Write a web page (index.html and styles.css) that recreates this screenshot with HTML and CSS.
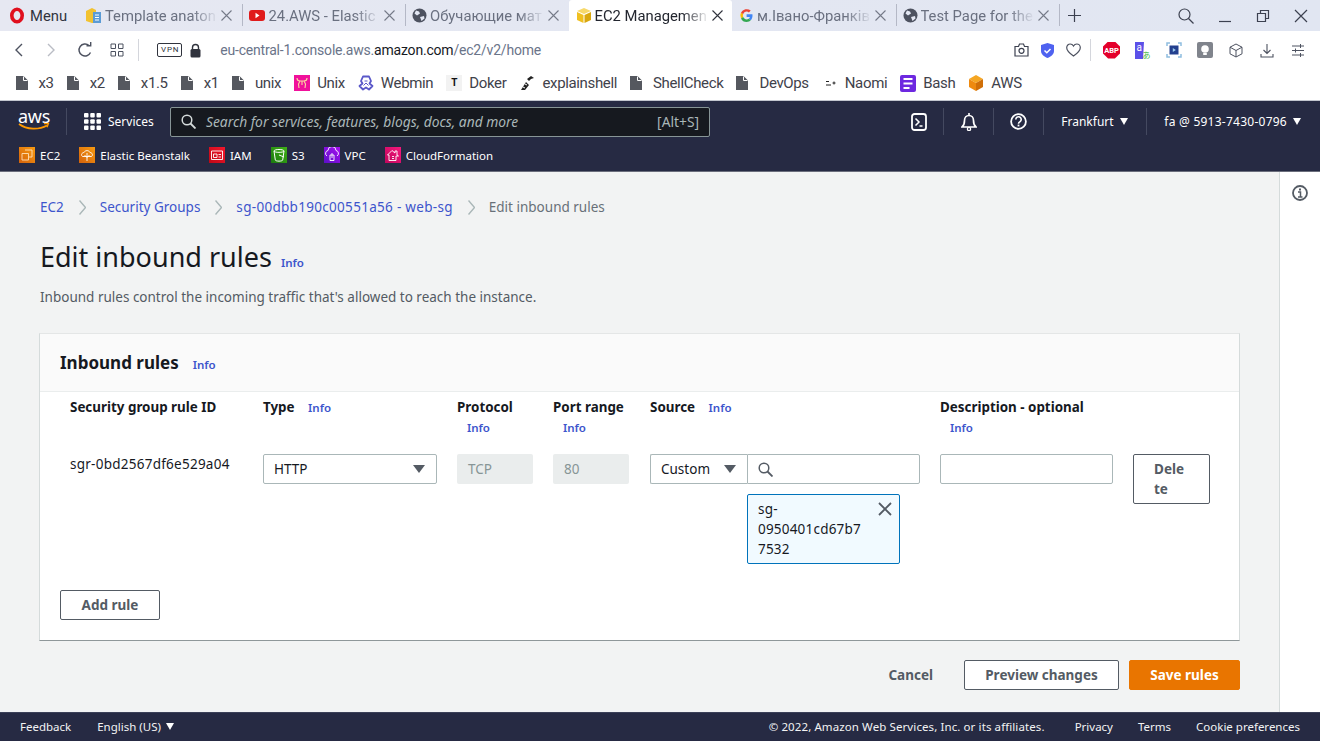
FILE: index.html
```html
<!DOCTYPE html>
<html lang="en">
<head>
  <meta charset="UTF-8">
  <title>Edit inbound rules</title>
  <link rel="stylesheet" href="styles.css">
</head>
<body>
  <div class="tabbar">
    <div class="menu">
      <svg width="16" height="17" viewBox="0 0 16 17"><ellipse cx="8" cy="8.500" rx="5.200" ry="6.300" fill="none" stroke="#e0101e" stroke-width="3.600"/></svg>
      <span>Menu</span>
    </div>
    <div class="tab">
      <svg class="fav" width="17" height="17" viewBox="0 0 17 17"><path d="M1 4l6-3 4 2v13H7l-6-2z" fill="#f2c230"/><path d="M8 5h8v11H8z" fill="#5b9bd5"/><path d="M10 8h4M10 10.500h4M10 13h4" stroke="#fff"/></svg>
      <span class="tab-title">Template anaton</span>
      <svg class="tab-x" width="11" height="11" viewBox="0 0 11 11"><path d="M.5 .5l10 10M10.500 .5l-10 10" stroke="#757a88" stroke-width="1.100"/></svg>
    </div>
    <div class="tab">
      <svg class="fav" width="17" height="17" viewBox="0 0 17 17"><rect x="0" y="3" width="16" height="11" rx="3" fill="#e01b1b"/><path d="M6.500 5.800l4 2.700-4 2.700z" fill="#fff"/></svg>
      <span class="tab-title">24.AWS - Elastic</span>
      <svg class="tab-x" width="11" height="11" viewBox="0 0 11 11"><path d="M.5 .5l10 10M10.500 .5l-10 10" stroke="#757a88" stroke-width="1.100"/></svg>
    </div>
    <div class="tab">
      <svg class="fav" width="15" height="15" viewBox="0 0 15 15"><circle cx="7.500" cy="7.500" r="7" fill="#4d5260"/><path d="M4 2.500l3 1 1 2-3 2-2.500-2zM8 9l4-1 .5 2.500-3 2.500z" fill="#e3e7f3"/></svg>
      <span class="tab-title">Обучающие мат</span>
      <svg class="tab-x" width="11" height="11" viewBox="0 0 11 11"><path d="M.5 .5l10 10M10.500 .5l-10 10" stroke="#757a88" stroke-width="1.100"/></svg>
    </div>
    <div class="tab active">
      <svg class="fav" width="16" height="17" viewBox="0 0 16 17"><path d="M8 1l7 3-7 3-7-3z" fill="#f7d96b"/><path d="M1 5l6.500 3v8L1 13z" fill="#f0c020"/><path d="M15 5L8.500 8v8L15 13z" fill="#d9a80f"/></svg>
      <span class="tab-title">EC2 Managemen</span>
      <svg class="tab-x" width="11" height="11" viewBox="0 0 11 11"><path d="M.5 .5l10 10M10.500 .5l-10 10" stroke="#30333d" stroke-width="1.100"/></svg>
    </div>
    <div class="tab">
      <svg class="fav" width="15" height="15" viewBox="0 0 15 15"><path d="M13.500 7.700c0-.5 0-1-.1-1.400H7.600v2.700h3.300a2.900 2.900 0 0 1-1.200 1.800l2 1.500c1.100-1.100 1.800-2.700 1.800-4.600z" fill="#4285f4"/><path d="M7.600 14c1.800 0 3.200-.6 4.100-1.700l-2-1.500c-.5.400-1.200.6-2.100.6-1.600 0-3-1.100-3.500-2.600l-2.100 1.600C3 12.600 5.100 14 7.600 14z" fill="#34a853"/><path d="M4.100 8.800a4 4 0 0 1 0-2.600L2 4.600a6.500 6.500 0 0 0 0 5.800z" fill="#fbbc05"/><path d="M7.600 3.500c.9 0 1.700.3 2.300.9L11.700 2.600A6.400 6.400 0 0 0 2 4.600l2.100 1.600c.5-1.500 1.900-2.700 3.500-2.700z" fill="#ea4335"/></svg>
      <span class="tab-title">м.Івано-Франків</span>
      <svg class="tab-x" width="11" height="11" viewBox="0 0 11 11"><path d="M.5 .5l10 10M10.500 .5l-10 10" stroke="#757a88" stroke-width="1.100"/></svg>
    </div>
    <div class="tab">
      <svg class="fav" width="15" height="15" viewBox="0 0 15 15"><circle cx="7.500" cy="7.500" r="7" fill="#4d5260"/><path d="M4 2.500l3 1 1 2-3 2-2.500-2zM8 9l4-1 .5 2.500-3 2.500z" fill="#e3e7f3"/></svg>
      <span class="tab-title">Test Page for the</span>
      <svg class="tab-x" width="11" height="11" viewBox="0 0 11 11"><path d="M.5 .5l10 10M10.500 .5l-10 10" stroke="#757a88" stroke-width="1.100"/></svg>
    </div>
    <div class="tab-plus">
      <svg width="13" height="13" viewBox="0 0 13 13"><path d="M6.500 0v13M0 6.500h13" stroke="#3c4150" stroke-width="1.200"/></svg>
    </div>
    <div class="win-controls">
      <svg width="16" height="16" viewBox="0 0 16 16"><circle cx="6.500" cy="6.500" r="5.500" fill="none" stroke="#3c4150" stroke-width="1.200"/><path d="M10.500 10.500l5 5" stroke="#3c4150" stroke-width="1.200"/></svg>
      <svg width="14" height="14" viewBox="0 0 14 14"><path d="M1 12.500h12" stroke="#3c4150" stroke-width="1.200"/></svg>
      <svg width="14" height="14" viewBox="0 0 14 14"><path d="M1.500 4.500h8v8h-8zM4.500 4.500v-3h8v8h-3" fill="none" stroke="#3c4150" stroke-width="1.200"/></svg>
      <svg width="14" height="14" viewBox="0 0 14 14"><path d="M1 1l12 12M13 1L1 13" stroke="#3c4150" stroke-width="1.200"/></svg>
    </div>
  </div>

  <div class="addressbar">
    <svg class="nav-ico" width="10" height="16" viewBox="0 0 10 16"><path d="M8 2L2 8l6 6" fill="none" stroke="#4d5260" stroke-width="1.400"/></svg>
    <svg class="nav-ico" width="10" height="16" viewBox="0 0 10 16"><path d="M2 2l6 6-6 6" fill="none" stroke="#b9bcc4" stroke-width="1.400"/></svg>
    <svg class="nav-ico" width="16" height="16" viewBox="0 0 16 16"><path d="M13.500 10.500A6 6 0 1 1 12 3.500" fill="none" stroke="#4d5260" stroke-width="1.400"/><path d="M9.500 3.800h4.200V0" fill="none" stroke="#4d5260" stroke-width="1.400"/></svg>
    <svg class="nav-ico" width="14" height="14" viewBox="0 0 14 14"><path d="M1 1h4.500v4.500H1zM8.500 1H13v4.500H8.500zM1 8.500h4.500V13H1zM8.500 8.500H13V13H8.500z" fill="none" stroke="#4d5260"/></svg>
    <span class="addr-sep"></span>
    <span class="vpn">VPN</span>
    <svg width="11" height="15" viewBox="0 0 11 15"><path d="M2.500 7V4.500a3 3 0 0 1 6 0V7" fill="none" stroke="#30333d" stroke-width="1.400"/><rect x=".5" y="6" width="10" height="8.500" rx="1.500" fill="#30333d"/></svg>
    <span class="url">eu-central-1.console.aws.<b>amazon.com</b>/ec2/v2/home</span>
    <div class="ext-icons">
      <span class="ext narrow"><svg width="15" height="14" viewBox="0 0 15 14"><path d="M1 3.500h3.500l1-2.500h4l1 2.500H14V13H1z" fill="none" stroke="#3c4150" stroke-width="1.200"/><circle cx="7.500" cy="7.800" r="2.500" fill="none" stroke="#3c4150" stroke-width="1.200"/></svg></span>
      <span class="ext narrow"><svg width="13" height="15" viewBox="0 0 13 15"><path d="M0 2l6.500-2L13 2v6c0 3.500-3 5.500-6.500 7C3 13.500 0 11.500 0 8z" fill="#4f62f0"/><path d="M3.500 7.500l2.300 2.300 3.700-3.800" fill="none" stroke="#fff" stroke-width="1.500"/></svg></span>
      <span class="ext narrow"><svg width="15" height="14" viewBox="0 0 15 14"><path d="M7.500 13C3.500 10.200.7 7.800.7 4.700.7 2.500 2.400 1 4.200 1c1.300 0 2.600.8 3.300 2 .7-1.200 2-2 3.300-2 1.800 0 3.500 1.500 3.500 3.700 0 3.100-2.800 5.500-6.800 8.300z" fill="none" stroke="#4d5260" stroke-width="1.200"/></svg></span>
      <span class="ext-sep"></span>
      <span class="ext"><span class="abp">ABP</span></span>
      <span class="ext"><svg class="translate" width="17" height="17" viewBox="0 0 17 17"><path d="M1 0h9l-1 17H1z" fill="#5b50e8"/><text x="2.500" y="8.500" font-size="10" fill="#fff">a</text><text x="8.500" y="16" font-size="8" fill="#3db83a">あ</text></svg></span>
      <span class="ext"><svg width="16" height="16" viewBox="0 0 16 16"><path d="M1 4V1h3M12 1h3v3M15 12v3h-3M4 15H1v-3" fill="none" stroke="#8fbde0" stroke-width="1.500"/><rect x="3.500" y="3.500" width="9" height="9" fill="#24408e"/><path d="M6.800 6l3 2-3 2z" fill="#9ccbee"/></svg></span>
      <span class="ext"><svg width="16" height="16" viewBox="0 0 16 16"><rect width="16" height="16" rx="2" fill="#80848c"/><circle cx="8" cy="7" r="3.800" fill="#fff"/><rect x="6.200" y="11" width="3.600" height="2" fill="#fff"/></svg></span>
      <span class="ext"><svg width="14" height="15" viewBox="0 0 14 15"><path d="M7 1l6 3.200v6.600L7 14l-6-3.200V4.200zM1 4.200l6 3.300 6-3.300M7 7.500V14" fill="none" stroke="#4d5260"/></svg></span>
      <span class="ext"><svg width="14" height="15" viewBox="0 0 14 15"><path d="M7 1v9M3.500 7L7 10.500 10.500 7M1 11v3h12v-3" fill="none" stroke="#4d5260" stroke-width="1.100"/></svg></span>
      <span class="ext"><svg width="14" height="13" viewBox="0 0 14 13"><path d="M1 2h12M1 6.500h12M1 11h12" stroke="#4d5260"/><path d="M9.500 0v4M4.500 4.500v4M9.500 9v4" stroke="#4d5260"/></svg></span>
    </div>
  </div>

  <div class="bookmarks">
    <span class="bm"><svg class="doc" width="12" height="14" viewBox="0 0 12 14"><path d="M0 0h7.500L12 4.500V14H0z" fill="#55585f"/><path d="M7.500 .5v4h4" fill="none" stroke="#fff"/></svg>x3</span>
    <span class="bm"><svg class="doc" width="12" height="14" viewBox="0 0 12 14"><path d="M0 0h7.500L12 4.500V14H0z" fill="#55585f"/><path d="M7.500 .5v4h4" fill="none" stroke="#fff"/></svg>x2</span>
    <span class="bm"><svg class="doc" width="12" height="14" viewBox="0 0 12 14"><path d="M0 0h7.500L12 4.500V14H0z" fill="#55585f"/><path d="M7.500 .5v4h4" fill="none" stroke="#fff"/></svg>x1.5</span>
    <span class="bm"><svg class="doc" width="12" height="14" viewBox="0 0 12 14"><path d="M0 0h7.500L12 4.500V14H0z" fill="#55585f"/><path d="M7.500 .5v4h4" fill="none" stroke="#fff"/></svg>x1</span>
    <span class="bm"><svg class="doc" width="12" height="14" viewBox="0 0 12 14"><path d="M0 0h7.500L12 4.500V14H0z" fill="#55585f"/><path d="M7.500 .5v4h4" fill="none" stroke="#fff"/></svg>unix</span>
    <span class="bm"><svg width="16" height="16" viewBox="0 0 16 16"><rect width="16" height="16" fill="#f0119b"/><path d="M3 3c0 2 1 3 3 3h4c2 0 3-1 3-3M6 6L4.500 9 5 13M10 6l1.500 3-.5 4M8 6v4" fill="none" stroke="#fbd9a0" stroke-width="1.100"/></svg>Unix</span>
    <span class="bm"><svg width="16" height="16" viewBox="0 0 16 16"><path d="M5 1.500h6L13 6l-1.500 2.500L14.500 11 11 14.500l-3-2-3 2L1.500 11l3-2.500L3 6z" fill="none" stroke="#5a58c9" stroke-width="1.800" stroke-linejoin="round"/><path d="M6.500 6h3M5.500 10.500L8 8l2.500 2.500" fill="none" stroke="#5a58c9"/></svg>Webmin</span>
    <span class="bm"><span class="doker-ico">T</span>Doker</span>
    <span class="bm"><svg width="16" height="16" viewBox="0 0 16 16"><path d="M2 15l5-8 3 3-4 5zM8 4l4-3 3 2-3 1-2 2z" fill="#222"/><path d="M4 12l2 1M6 9l2 1" stroke="#fff"/></svg>explainshell</span>
    <span class="bm"><svg class="doc" width="12" height="14" viewBox="0 0 12 14"><path d="M0 0h7.500L12 4.500V14H0z" fill="#55585f"/><path d="M7.500 .5v4h4" fill="none" stroke="#fff"/></svg>ShellCheck</span>
    <span class="bm"><svg class="doc" width="12" height="14" viewBox="0 0 12 14"><path d="M0 0h7.500L12 4.500V14H0z" fill="#55585f"/><path d="M7.500 .5v4h4" fill="none" stroke="#fff"/></svg>DevOps</span>
    <span class="bm"><svg width="16" height="16" viewBox="0 0 16 16"><path d="M4 6.500h3M4 10h5M12 6.500v3M10.500 8h3" stroke="#222"/></svg>Naomi</span>
    <span class="bm"><svg width="16" height="17" viewBox="0 0 16 17"><rect y="0" width="16" height="17" rx="2" fill="#6d28e0"/><path d="M3.500 4h9M3.500 8.500h9M3.500 13h6" stroke="#fff" stroke-width="2"/></svg>Bash</span>
    <span class="bm"><svg width="16" height="18" viewBox="0 0 16 18"><path d="M8 1l7 4-7 4-7-4z" fill="#f5a623"/><path d="M1 5l7 4v8l-7-4z" fill="#ee8a10"/><path d="M15 5L8 9v8l7-4z" fill="#d06f08"/></svg>AWS</span>
  </div>

  <header class="aws-nav">
    <div class="nav-top">
      <div class="aws-logo">
        <span>aws</span>
        <svg width="32" height="8" viewBox="0 0 32 8"><path d="M1 1c8 6 20 6 28 1.500" fill="none" stroke="#f90" stroke-width="1.800"/><path d="M26 .5l4.500-.2-1.500 4" fill="none" stroke="#f90" stroke-width="1.400"/></svg>
      </div>
      <span class="nav-sep"></span>
      <div class="services">
        <svg width="17" height="17" viewBox="0 0 17 17" fill="#fff"><rect width="4.500" height="4.500" rx="1"/><rect x="6.250" width="4.500" height="4.500" rx="1"/><rect x="12.500" width="4.500" height="4.500" rx="1"/><rect y="6.250" width="4.500" height="4.500" rx="1"/><rect x="6.250" y="6.250" width="4.500" height="4.500" rx="1"/><rect x="12.500" y="6.250" width="4.500" height="4.500" rx="1"/><rect y="12.500" width="4.500" height="4.500" rx="1"/><rect x="6.250" y="12.500" width="4.500" height="4.500" rx="1"/><rect x="12.500" y="12.500" width="4.500" height="4.500" rx="1"/></svg>
        <span>Services</span>
      </div>
      <div class="search">
        <svg width="15" height="15" viewBox="0 0 15 15"><circle cx="6" cy="6" r="4.800" fill="none" stroke="#d5dbdb" stroke-width="1.500"/><path d="M9.500 9.500l5 5" stroke="#d5dbdb" stroke-width="1.800"/></svg>
        <span class="search-text">Search for services, features, blogs, docs, and more</span>
        <span class="search-key">[Alt+S]</span>
      </div>
      <div class="nav-right">
        <span class="nav-ico-cell"><svg width="16" height="18" viewBox="0 0 16 18"><rect x="1" y="1" width="14" height="16" rx="2.500" fill="none" stroke="#fff" stroke-width="1.800"/><path d="M4.500 5.500L8 9l-3.500 3.500M8.500 13h3" fill="none" stroke="#fff" stroke-width="1.500"/></svg></span>
        <span class="nav-ico-cell"><svg width="16" height="18" viewBox="0 0 16 18"><path d="M1 14c2-1.500 2.500-3 2.500-6.500C3.500 4.500 5.500 2.500 8 2.500s4.500 2 4.500 5c0 3.500.5 5 2.500 6.500z" fill="none" stroke="#fff" stroke-width="1.700"/><path d="M8 0v2.500" stroke="#fff" stroke-width="1.600"/><circle cx="8" cy="16" r="1.600" fill="none" stroke="#fff" stroke-width="1.300"/></svg></span>
        <span class="nav-ico-cell"><svg width="17" height="17" viewBox="0 0 17 17"><circle cx="8.500" cy="8.500" r="7.400" fill="none" stroke="#fff" stroke-width="1.800"/><path d="M5.800 6.500a2.700 2.700 0 1 1 4.300 2.100c-1 .7-1.600 1.100-1.600 2.100" fill="none" stroke="#fff" stroke-width="1.600"/><rect x="7.600" y="11.600" width="1.800" height="1.800" fill="#fff"/></svg></span>
        <span class="nav-menu region">Frankfurt <i class="caret"></i></span>
        <span class="nav-menu account">fa @ 5913-7430-0796 <i class="caret"></i></span>
      </div>
    </div>
    <div class="favs">
      <span class="fav-item"><i class="svc svc-orange"><svg width="16" height="16" viewBox="0 0 16 16"><path d="M6 3h7v7H9.500M3 6.500h6.500V13H3z" fill="none" stroke="#ffe0b8" stroke-width=".9"/></svg></i>EC2</span>
      <span class="fav-item"><i class="svc svc-orange"><svg width="16" height="16" viewBox="0 0 16 16"><path d="M3.500 9.500C1.500 8 3 5.500 5 5.500 6 3 10 3 11 5.500c2 0 3.500 2.500 1.500 4zM8 6v8M5.500 8L8 10.500 10.500 8" fill="none" stroke="#fff" stroke-width=".9"/></svg></i>Elastic Beanstalk</span>
      <span class="fav-item"><i class="svc svc-red"><svg width="16" height="16" viewBox="0 0 16 16"><path d="M2.500 4h11v8.500h-11zM4.500 7h3.500v3.500H4.500zM9.500 7.500h2.500M9.500 10h2.500" fill="none" stroke="#fff" stroke-width=".9"/></svg></i>IAM</span>
      <span class="fav-item"><i class="svc svc-green"><svg width="16" height="16" viewBox="0 0 16 16"><path d="M3 4c0-2 10-2 10 0l-1.300 9c-.3 1.500-7.100 1.500-7.400 0zM3 4c0 1.800 10 1.800 10 0M8 8l5 2" fill="none" stroke="#fff"/></svg></i>S3</span>
      <span class="fav-item"><i class="svc svc-purple"><svg width="16" height="16" viewBox="0 0 16 16"><path d="M3 9a3 3 0 0 1 1-5.500 4 4 0 0 1 8 0A3 3 0 0 1 13 9M6 8h4v5.500H6zM8 6v5" fill="none" stroke="#fff" stroke-width=".9"/></svg></i>VPC</span>
      <span class="fav-item"><i class="svc svc-pink"><svg width="16" height="16" viewBox="0 0 16 16"><path d="M2.500 8L7 3.500 10 6V4h2v4l1.500 1H11v4.500H4V8zM7 9.500h2M7 11.500h2" fill="none" stroke="#fff" stroke-width=".9"/></svg></i>CloudFormation</span>
    </div>
  </header>

  <div class="layout">
    <main class="content">
      <nav class="crumbs">
        <a>EC2</a>
        <svg class="chev" width="7" height="15" viewBox="0 0 7 15"><path d="M.5 .5L6.500 7.500 .5 14.500" fill="none" stroke="#aab7b8" stroke-width="1.400"/></svg>
        <a>Security Groups</a>
        <svg class="chev" width="7" height="15" viewBox="0 0 7 15"><path d="M.5 .5L6.500 7.500 .5 14.500" fill="none" stroke="#aab7b8" stroke-width="1.400"/></svg>
        <a class="crumb-id">sg-00dbb190c00551a56 - web-sg</a>
        <svg class="chev" width="7" height="15" viewBox="0 0 7 15"><path d="M.5 .5L6.500 7.500 .5 14.500" fill="none" stroke="#aab7b8" stroke-width="1.400"/></svg>
        <span>Edit inbound rules</span>
      </nav>
      <div class="title-row">
        <h1>Edit inbound rules</h1>
        <a class="info">Info</a>
      </div>
      <p class="lead">Inbound rules control the incoming traffic that's allowed to reach the instance.</p>

      <section class="card">
        <div class="card-head">
          <h2>Inbound rules</h2>
          <a class="info">Info</a>
        </div>
        <div class="rules">
          <div class="col-h">Security group rule ID</div>
          <div class="col-h">Type <a class="info">Info</a></div>
          <div class="col-h">Protocol <a class="info under">Info</a></div>
          <div class="col-h">Port range <a class="info under">Info</a></div>
          <div class="col-h">Source <a class="info">Info</a></div>
          <div class="col-h">Description - optional <a class="info under">Info</a></div>
          <div></div>

          <div class="rule-id">sgr-0bd2567df6e529a04</div>
          <div class="select type-select">HTTP <i class="sel-caret"></i></div>
          <div class="readonly">TCP</div>
          <div class="readonly">80</div>
          <div class="source">
            <div class="source-top">
              <div class="select custom-select">Custom <i class="sel-caret"></i></div>
              <div class="source-search">
                <svg width="15" height="15" viewBox="0 0 15 15"><circle cx="6" cy="6" r="4.800" fill="none" stroke="#545b64" stroke-width="1.500"/><path d="M9.500 9.500l5 5" stroke="#545b64" stroke-width="1.800"/></svg>
              </div>
            </div>
            <div class="token">
              <span>sg-0950401cd67b77532</span>
              <svg width="14" height="14" viewBox="0 0 14 14"><path d="M1 1l12 12M13 1L1 13" stroke="#545b64" stroke-width="1.800"/></svg>
            </div>
          </div>
          <div class="desc-input"></div>
          <button class="btn delete">Delete</button>
        </div>
        <div class="card-foot">
          <button class="btn add">Add rule</button>
        </div>
      </section>

      <div class="actions">
        <button class="link-btn">Cancel</button>
        <button class="btn preview">Preview changes</button>
        <button class="btn save">Save rules</button>
      </div>
    </main>
    <aside class="side">
      <svg width="16" height="16" viewBox="0 0 16 16"><circle cx="8" cy="8" r="7" fill="none" stroke="#545b64" stroke-width="1.800"/><rect x="7" y="3.500" width="2" height="2" fill="#545b64"/><path d="M6 7h2.500v4.500M6 12h4.500" fill="none" stroke="#545b64" stroke-width="1.500"/></svg>
    </aside>
  </div>

  <footer class="foot">
    <span class="foot-link">Feedback</span>
    <span class="foot-link">English (US) <i class="caret"></i></span>
    <span class="copy">© 2022, Amazon Web Services, Inc. or its affiliates.</span>
    <span class="foot-link">Privacy</span>
    <span class="foot-link">Terms</span>
    <span class="foot-link">Cookie preferences</span>
  </footer>
</body>
</html>
```

FILE: styles.css
```css
* {
  box-sizing: border-box;
}
html, body {
  height: 100%;
}
body {
  margin: 0;
  display: flex;
  flex-direction: column;
  overflow: hidden;
  font-family: "Noto Sans", sans-serif;
  font-size: 13.500px;
  color: #16191f;
  background: #fff;
}
svg {
  flex: none;
  display: block;
}

/* browser tabs */
.tabbar {
  height: 31px;
  flex: none;
  display: flex;
  background: linear-gradient(90deg, #e6e8f2, #e1e6f2);
  font-family: Roboto, sans-serif;
  font-size: 14.800px;
  color: #6a7080;
}
.menu {
  width: 78px;
  display: flex;
  align-items: center;
  gap: 5px;
  padding-left: 9px;
  color: #30333d;
}
.tab {
  width: 163.500px;
  display: flex;
  align-items: center;
  padding: 0 10px 0 7px;
  position: relative;
}
.tab + .tab::after {
  content: "";
  position: absolute;
  left: 0;
  top: 4px;
  height: 22px;
  width: 1px;
  background: #b4b8c6;
}
.tab.active {
  background: #fff;
  color: #23262f;
  border-radius: 3px 3px 0 0;
}
.tab.active::after,
.tab.active + .tab::after {
  display: none;
}
.tab-title {
  flex: 1;
  margin: 0 5px 0 3px;
  white-space: nowrap;
  -webkit-mask-image: linear-gradient(90deg, #000 78%, transparent 102%);
  mask-image: linear-gradient(90deg, #000 78%, transparent 102%);
}
.tab-plus {
  width: 30px;
  display: flex;
  align-items: center;
  justify-content: center;
  border-left: 1px solid #b4b8c6;
  margin: 4px 0 5px;
}
.win-controls {
  margin-left: auto;
  display: flex;
  align-items: center;
  gap: 24px;
  padding-right: 12px;
}

/* address bar */
.addressbar {
  height: 35px;
  flex: none;
  display: flex;
  align-items: center;
  padding: 3px 7px 0 14px;
  font-family: Roboto, sans-serif;
}
.nav-ico:nth-child(1) {
  margin-right: 22px;
}
.nav-ico:nth-child(2) {
  margin-right: 21px;
}
.nav-ico:nth-child(3) {
  margin-right: 17px;
}
.nav-ico:nth-child(4) {
  margin-right: 14px;
}
.addr-sep {
  width: 1px;
  height: 22px;
  background: #d4d6dc;
  margin-right: 18px;
}
.vpn {
  border: 1px solid #30333d;
  border-radius: 2px;
  font-size: 8px;
  letter-spacing: .8px;
  height: 14px;
  line-height: 12px;
  padding: 0 2px 0 3px;
  margin-right: 8px;
  color: #30333d;
}
.url {
  margin-left: 19px;
  font-size: 14px;
  letter-spacing: -.2px;
  color: #6a7489;
}
.url b {
  font-weight: 400;
  color: #16191f;
}
.ext-icons {
  margin-left: auto;
  display: flex;
  align-items: center;
}
.ext {
  width: 31px;
  display: flex;
  justify-content: center;
}
.ext.narrow {
  width: 26px;
}
.ext-sep {
  width: 1px;
  height: 22px;
  background: #d4d6dc;
  margin: 0 5px 0 4px;
}
.abp {
  width: 17px;
  height: 17px;
  background: #e4002b;
  color: #fff;
  font-size: 7.500px;
  font-weight: 700;
  line-height: 17px;
  text-align: center;
  clip-path: polygon(30% 0, 70% 0, 100% 30%, 100% 70%, 70% 100%, 30% 100%, 0 70%, 0 30%);
}
.translate text {
  font-family: Roboto, "Noto Sans CJK JP", sans-serif;
}

/* bookmarks */
.bookmarks {
  height: 34px;
  flex: none;
  display: flex;
  align-items: center;
  gap: 13px;
  padding-left: 15.500px;
  font-family: Roboto, sans-serif;
  font-size: 15px;
  letter-spacing: -.35px;
  color: #3f424b;
}
.bm {
  display: flex;
  align-items: center;
  gap: 7px;
}
.doc {
  margin-right: 4px;
}
.doker-ico {
  width: 16px;
  height: 16px;
  background: #f2f2f2;
  color: #111;
  font-size: 10px;
  font-weight: 700;
  line-height: 16px;
  text-align: center;
}

/* aws header */
.aws-nav {
  flex: none;
  height: 72px;
  background: #262a43;
  border-top: 1px solid #c2c6cf;
  border-bottom: 1px solid #6b6e7c;
  color: #fff;
}
.nav-top {
  height: 41px;
  display: flex;
  align-items: center;
}
.aws-logo {
  width: 66px;
  padding-left: 18px;
  font-size: 18px;
  line-height: 12px;
  letter-spacing: -.3px;
}
.aws-logo span {
  display: block;
  margin-top: -2px;
}
.aws-logo svg {
  margin-top: 1px;
}
.nav-sep {
  width: 1px;
  height: 27px;
  background: #444960;
}
.services {
  width: 103px;
  display: flex;
  align-items: center;
  gap: 7px;
  padding-left: 17px;
  font-size: 12px;
}
.search {
  width: 540px;
  height: 30px;
  display: flex;
  align-items: center;
  background: #16191f;
  border: 1px solid #879596;
  border-radius: 2px;
  padding: 0 10px;
  font-size: 13.800px;
  color: #aab7b8;
}
.search-text {
  margin-left: 10px;
  font-style: italic;
  flex: 1;
}
.nav-right {
  margin-left: auto;
  display: flex;
  align-items: center;
  height: 27px;
  font-size: 12px;
}
.nav-ico-cell {
  width: 50px;
  height: 27px;
  border-right: 1px solid #444960;
  display: flex;
  align-items: center;
  justify-content: center;
}
.nav-menu {
  display: flex;
  align-items: center;
  gap: 6px;
  white-space: nowrap;
}
.region {
  width: 103px;
  height: 27px;
  padding-left: 17px;
  border-right: 1px solid #444960;
}
.account {
  padding: 0 19px 0 17px;
  letter-spacing: .25px;
}
.caret {
  display: inline-block;
  width: 0;
  height: 0;
  border-left: 4px solid transparent;
  border-right: 4px solid transparent;
  border-top: 7px solid #fff;
}
.favs {
  display: flex;
  align-items: center;
  gap: 19px;
  padding: 5px 0 0 19px;
  font-size: 11.500px;
}
.fav-item {
  display: flex;
  align-items: center;
  gap: 5px;
}
.svc {
  width: 16px;
  height: 16px;
  display: block;
}
.svc-orange { background: linear-gradient(45deg, #d4620c, #f79a10); }
.svc-red { background: linear-gradient(45deg, #bd0816, #f5172c); }
.svc-green { background: linear-gradient(45deg, #1b7a0f, #3fb016); }
.svc-purple { background: linear-gradient(45deg, #5a0fc8, #a80ff0); }
.svc-pink { background: linear-gradient(45deg, #c0075c, #f5187d); }

/* page */
.layout {
  flex: 1;
  min-height: 0;
  display: flex;
}
.content {
  flex: 1;
  min-width: 0;
  padding: 0 39px 0 40px;
  background: #f2f3f3;
}
.side {
  width: 41px;
  flex: none;
  background: #fff;
  border-left: 1px solid #d5dbdb;
  padding: 13px 0 0 12px;
}
.crumbs {
  height: 71px;
  padding-top: 26px;
  display: flex;
  align-items: flex-start;
  font-size: 13.500px;
  line-height: 19px;
  color: #687078;
}
.crumbs a {
  color: #3d55cc;
}
.crumb-id {
  letter-spacing: .3px;
}
.chev {
  margin: 2px 14px 0 15px;
}
.info {
  font-size: 11.500px;
  font-weight: 600;
  color: #3d55cc;
}
.title-row {
  display: flex;
  align-items: center;
  gap: 9px;
  height: 32px;
  margin-top: -2px;
}
h1 {
  margin: 0;
  font-size: 27px;
  font-weight: 400;
  line-height: 32px;
}
.title-row .info {
  margin-top: 10px;
}
.lead {
  margin: 15px 0 0;
  line-height: 18px;
  color: #545b64;
}
.card {
  margin: 27px 0 0 -1px;
  height: 308px;
  background: #fff;
  border-top: 1px solid #e4e6e6;
  border-bottom: 1px solid #8f9799;
  border-left: 1px solid #d5dbdb;
  border-right: 1px solid #d5dbdb;
  display: flex;
  flex-direction: column;
}
.card-head {
  height: 58px;
  flex: none;
  display: flex;
  align-items: center;
  gap: 14px;
  padding-left: 20px;
  background: #fafafa;
  border-bottom: 1px solid #eaeded;
}
h2 {
  margin: 0;
  font-size: 17px;
  font-weight: 700;
}
.card-head .info {
  margin-top: 4px;
}
.rules {
  display: grid;
  grid-template-columns: 193px 194px 96px 97px 290px 193px 77px;
  grid-template-rows: 62px 110px;
  padding-left: 30px;
}
.col-h {
  padding: 5px 10px 0 0;
  font-size: 13.400px;
  font-weight: 700;
  line-height: 20px;
}
.col-h .info {
  margin-left: 10px;
}
.col-h .under {
  display: block;
  margin-top: 1px;
}
.rule-id {
  letter-spacing: .25px;
  line-height: 20px;
}
.select {
  height: 30px;
  display: flex;
  align-items: center;
  justify-content: space-between;
  background: #fff;
  border: 1px solid #aab7b8;
  border-radius: 2px;
  padding: 0 11px 0 10px;
}
.type-select {
  width: 174px;
}
.sel-caret {
  width: 0;
  height: 0;
  border-left: 6px solid transparent;
  border-right: 6px solid transparent;
  border-top: 8px solid #545b64;
}
.readonly {
  width: 76px;
  height: 30px;
  padding: 0 11px;
  background: #eaeded;
  border-radius: 2px;
  color: #879596;
  line-height: 31px;
}
.source {
  width: 270px;
}
.source-top {
  display: flex;
}
.custom-select {
  width: 97px;
  border-right: 0;
  border-radius: 2px 0 0 2px;
}
.source-search {
  flex: 1;
  height: 30px;
  padding: 7px 0 0 10px;
  border: 1px solid #aab7b8;
  border-radius: 0 2px 2px 0;
}
.token {
  width: 153px;
  height: 70px;
  margin: 10px 0 0 97px;
  padding: 4px 7px 0 10px;
  display: flex;
  justify-content: space-between;
  align-items: flex-start;
  background: #f1faff;
  border: 1px solid #0073bb;
  border-radius: 2px;
  line-height: 20px;
}
.token span {
  width: 110px;
  letter-spacing: .2px;
  overflow-wrap: anywhere;
}
.token svg {
  margin-top: 3px;
}
.desc-input {
  width: 173px;
  height: 30px;
  border: 1px solid #aab7b8;
  border-radius: 2px;
  background: #fff;
}
.btn {
  font-family: inherit;
  font-size: 13.500px;
  font-weight: 700;
  line-height: 20px;
  color: #545b64;
  background: #fff;
  border: 1px solid #545b64;
  border-radius: 2px;
  height: 30px;
  padding: 0 20px;
  white-space: nowrap;
}
.delete {
  width: 77px;
  height: 50px;
  white-space: normal;
  overflow-wrap: anywhere;
  text-align: left;
}
.card-foot {
  padding: 26px 0 0 20px;
}
.add {
  width: 100px;
  padding: 0;
}
.actions {
  margin-top: 19px;
  display: flex;
  align-items: center;
  justify-content: flex-end;
}
.link-btn {
  font-family: inherit;
  font-size: 13.500px;
  font-weight: 700;
  color: #545b64;
  background: none;
  border: 0;
  padding: 0;
  margin-right: 31px;
}
.preview {
  width: 155px;
  padding: 0;
  margin-right: 10px;
}
.save {
  width: 111px;
  padding: 0;
  color: #fff;
  background: #e97500;
  border-color: #e97500;
}

/* footer */
.foot {
  flex: none;
  height: 29px;
  display: flex;
  align-items: center;
  padding: 0 20px 2px;
  background: #262a43;
  border-top: 1px solid #3b4058;
  color: #f2f3f3;
  font-size: 11.500px;
}
.foot-link {
  margin-right: 25px;
  display: flex;
  align-items: center;
  gap: 5px;
}
.foot-link:first-child {
  margin-right: 26px;
}
.copy {
  margin-left: auto;
  margin-right: 30px;
  letter-spacing: .1px;
}
.foot-link:last-child {
  margin-right: 0;
}
```
